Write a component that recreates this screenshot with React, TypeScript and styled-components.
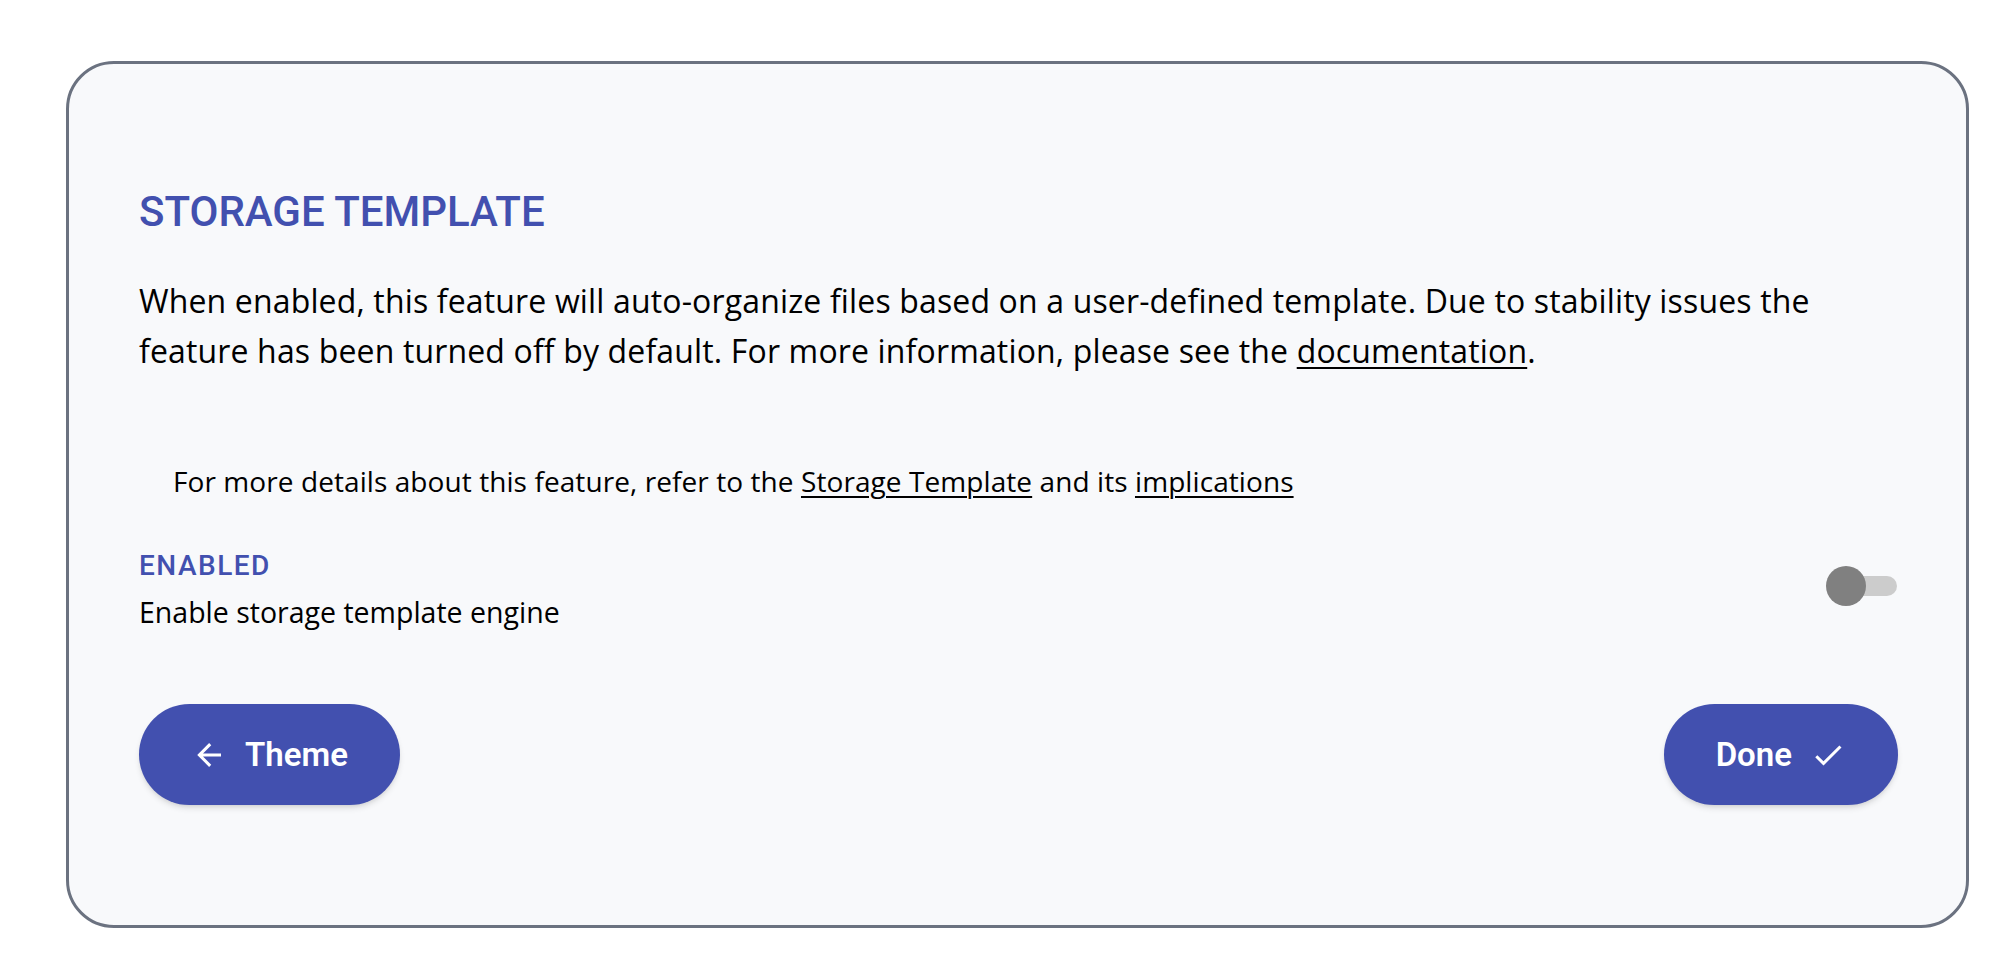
import React from "react";
import styled, { createGlobalStyle } from "styled-components";

const GlobalStyle = createGlobalStyle`
  html, body {
    margin: 0;
    padding: 0;
    background: #ffffff;
  }
  body {
    font-family: "Open Sans", Roboto, "Liberation Sans", Arial, sans-serif;
    color: #000000;
  }
  * { box-sizing: border-box; }
`;

const PRIMARY = "#4250af";
const HEADING_FONT = `Roboto, "Liberation Sans", Arial, sans-serif`;
const BODY_FONT = `"Open Sans", Roboto, "Liberation Sans", Arial, sans-serif`;

const Page = styled.div`
  padding: 61px 25px 54px 66px;
`;

const Card = styled.section`
  border: 3px solid #6b7280;
  border-radius: 48px;
  background: #f8f9fb;
  padding: 123px 68px 120px 70px;
  display: flex;
  flex-direction: column;
`;

const Title = styled.h2`
  margin: 0;
  font-family: ${HEADING_FONT};
  font-size: 42px;
  line-height: 50px;
  font-weight: 500;
  color: ${PRIMARY};
`;

const Description = styled.p`
  margin: 39px 0 0;
  font-family: ${BODY_FONT};
  font-size: 32px;
  line-height: 50px;
  letter-spacing: 0.15px;
  font-weight: 400;
`;

const Note = styled.p`
  margin: 85px 0 0;
  padding-left: 34px;
  font-family: ${BODY_FONT};
  font-size: 28px;
  line-height: 40px;
  letter-spacing: 0.08px;
`;

const Link = styled.a`
  color: inherit;
  text-decoration: underline;
  text-underline-offset: 4px;
  text-decoration-thickness: 2px;
  cursor: pointer;
`;

const SettingRow = styled.div`
  margin-top: 45px;
  display: flex;
  align-items: center;
  justify-content: space-between;
`;

const SettingText = styled.div`
  display: flex;
  flex-direction: column;
`;

const SettingLabel = styled.span`
  font-family: ${HEADING_FONT};
  font-size: 28px;
  line-height: 40px;
  font-weight: 500;
  letter-spacing: 1.5px;
  color: ${PRIMARY};
`;

const SettingDesc = styled.span`
  margin-top: 6px;
  font-family: ${BODY_FONT};
  font-size: 28.5px;
  line-height: 40px;
`;

const Toggle = styled.div`
  position: relative;
  width: 72px;
  height: 40px;
  margin-bottom: 7px;
  flex-shrink: 0;
`;

const Track = styled.span`
  position: absolute;
  left: 3px;
  top: 10px;
  width: 68px;
  height: 20px;
  border-radius: 10px;
  background: #cccccc;
`;

const Knob = styled.span`
  position: absolute;
  left: 0;
  top: 0;
  width: 40px;
  height: 40px;
  border-radius: 50%;
  background: #808080;
`;

const Footer = styled.div`
  margin-top: 72px;
  display: flex;
  justify-content: space-between;
  align-items: center;
`;

const PillButton = styled.button`
  height: 101px;
  padding: 0 52px;
  border: none;
  border-radius: 999px;
  background: ${PRIMARY};
  color: #ffffff;
  display: flex;
  align-items: center;
  gap: 18px;
  font-family: ${HEADING_FONT};
  font-size: 33px;
  font-weight: 600;
  box-shadow: 0 4px 6px -1px rgba(0, 0, 0, 0.12), 0 2px 4px -2px rgba(0, 0, 0, 0.1);
  cursor: pointer;
`;

const Icon = ({ d }: { d: string }) => (
  <svg width="36" height="36" viewBox="0 0 24 24" aria-hidden="true">
    <path d={d} fill="currentColor" />
  </svg>
);

const ARROW_LEFT = "M20,11V13H8L13.5,18.5L12.08,19.92L4.16,12L12.08,4.08L13.5,5.5L8,11H20Z";
const CHECK = "M21,7L9,19L3.5,13.5L4.91,12.09L9,16.17L19.59,5.59L21,7Z";

export default function App() {
  return (
    <>
      <GlobalStyle />
      <Page>
        <Card>
          <Title>STORAGE TEMPLATE</Title>
          <Description>
            When enabled, this feature will auto-organize files based on a user-defined template. Due to stability
            issues the feature has been turned off by default. For more information, please see the{" "}
            <Link>documentation</Link>.
          </Description>
          <Note>
            For more details about this feature, refer to the <Link>Storage Template</Link> and its{" "}
            <Link>implications</Link>
          </Note>
          <SettingRow>
            <SettingText>
              <SettingLabel>ENABLED</SettingLabel>
              <SettingDesc>Enable storage template engine</SettingDesc>
            </SettingText>
            <Toggle role="switch" aria-checked="false">
              <Track />
              <Knob />
            </Toggle>
          </SettingRow>
          <Footer>
            <PillButton>
              <Icon d={ARROW_LEFT} />
              <span>Theme</span>
            </PillButton>
            <PillButton>
              <span>Done</span>
              <Icon d={CHECK} />
            </PillButton>
          </Footer>
        </Card>
      </Page>
    </>
  );
}
